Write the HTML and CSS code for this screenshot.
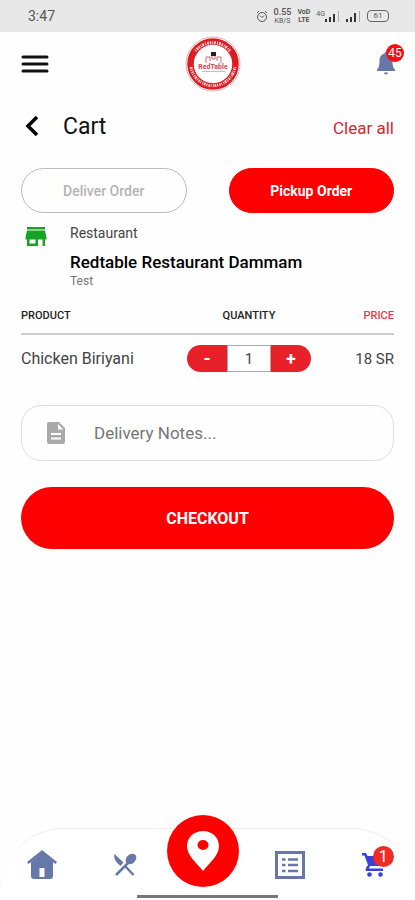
FILE: index.html
```html
<!DOCTYPE html>
<html lang="en">
  <head>
    <meta charset="UTF-8" />
    <meta name="viewport" content="width=device-width, initial-scale=1.0" />
    <title>Cart</title>
    <link rel="stylesheet" href="styles.css">
  </head>
  <body>
    <div class="statusbar">
      <span class="clock">3:47</span>
      <div class="status-icons">
        <svg width="12" height="14" viewBox="0 0 12 14" fill="none" stroke="#555">
          <circle cx="6" cy="8" r="4.5" />
          <path d="M4 6.500l2 2 2-2M1 4l2-2M11 4L9 2" />
        </svg>
        <span class="tiny"><b>0.55</b><small>KB/S</small></span>
        <span class="tiny tiny-bold"><small>VoD</small><small>LTE</small></span>
        <span class="signal">
          <small>4G</small>
          <svg width="15" height="12" viewBox="0 0 15 12">
            <path d="M0 9h2v3H0zM4 7h2v5H4zM8 4h2v8H8z" fill="#333" />
            <path d="M13 1h1v11h-1z" fill="#aaa" />
          </svg>
        </span>
        <svg width="15" height="12" viewBox="0 0 15 12">
          <path d="M0 9h2v3H0zM4 7h2v5H4zM8 3h2v9H8z" fill="#333" />
          <path d="M13 1h1v11h-1z" fill="#aaa" />
        </svg>
        <span class="battery">61</span>
      </div>
    </div>

    <header class="topbar">
      <button class="icon-btn" aria-label="Menu">
        <svg width="28" height="18" viewBox="0 0 28 18" stroke="#111" stroke-width="3" stroke-linecap="round">
          <path d="M2 2h24M2 9h24M2 16h24" />
        </svg>
      </button>
      <svg class="logo" width="56" height="56" viewBox="0 0 56 56">
        <circle cx="28" cy="28" r="27" fill="#fff" stroke="#ddb5b5" />
        <circle cx="28" cy="28" r="22.500" fill="none" stroke="#dc1b22" stroke-width="6.500" />
        <path d="M10.500 15A22 22 0 0 1 45 15" fill="none" stroke="#fff" stroke-width="3" stroke-dasharray="1 1 2 .8 1.500 1 .8 .7 2 1.200" opacity=".8" />
        <path d="M6 31A22.300 22.300 0 0 0 50 31" fill="none" stroke="#fff" stroke-width="3" stroke-dasharray="2 .8 1 1 1.500 .8 .8 1.300 1 .7" opacity=".8" />
        <path d="M26 16h5v4h-5z" fill="#222" />
        <path d="M21 27v-6h4v4M36 27v-6h-4v4M27 20v3h3v-3" fill="none" stroke="#cf6a6e" />
        <text x="28" y="33" text-anchor="middle" class="logo-text">RedTable</text>
        <path d="M17 35.500h23" stroke="#e5b3b5" />
      </svg>
      <button class="icon-btn bell" aria-label="Notifications">
        <svg width="20" height="26" viewBox="0 0 20 26" fill="#6678a8">
          <path d="M10 1c1 0 1.500.7 1.500 1.600C15 3.500 16.500 6.500 16.500 10c0 5 .8 7 2.500 8.500V20H1v-1.500C2.700 17 3.500 15 3.500 10c0-3.500 1.500-6.500 5-7.400C8.500 1.700 9 1 10 1z" />
          <path d="M8 21.500h4a2 2 0 0 1-4 0z" />
        </svg>
        <span class="badge">45</span>
      </button>
    </header>

    <main>
      <div class="title-row">
        <button class="icon-btn" aria-label="Back">
          <svg width="20" height="22" viewBox="0 0 20 22" fill="none" stroke="#000" stroke-width="3.500">
            <path d="M16 2L7 11l9 9" />
          </svg>
        </button>
        <h1>Cart</h1>
        <a href="#" class="clear">Clear all</a>
      </div>

      <div class="order-type">
        <button class="pill">Deliver Order</button>
        <button class="pill pill-active">Pickup Order</button>
      </div>

      <section class="restaurant">
        <svg width="22" height="20" viewBox="0 0 22 20" fill="#15a522">
          <path d="M2 0h18v2.500H2zM2 3.500h18l1.500 7v2H20V19h-2.500v-6.500H13V19H2v-6.500H.5v-2zM4.500 12.500v4h6v-4z" fill-rule="evenodd" />
        </svg>
        <div>
          <p class="label">Restaurant</p>
          <h2>Redtable Restaurant Dammam</h2>
          <p class="note">Test</p>
        </div>
      </section>

      <table class="cart">
        <thead>
          <tr>
            <th class="product">PRODUCT</th>
            <th class="quantity">QUANTITY</th>
            <th class="price">PRICE</th>
          </tr>
        </thead>
        <tbody>
          <tr>
            <td class="product">Chicken Biriyani</td>
            <td class="quantity">
              <div class="stepper">
                <button aria-label="Decrease">-</button>
                <input type="text" value="1" aria-label="Quantity" />
                <button aria-label="Increase">+</button>
              </div>
            </td>
            <td class="price">18 SR</td>
          </tr>
        </tbody>
      </table>

      <label class="notes">
        <svg width="18" height="22" viewBox="0 0 18 22">
          <path d="M2 0h10l6 6v14a2 2 0 0 1-2 2H2a2 2 0 0 1-2-2V2a2 2 0 0 1 2-2zM11 2v5.500h5.500zM4 11v2h10v-2zM4 15.500v2h10v-2z" fill="#aaa" fill-rule="evenodd" />
        </svg>
        <input type="text" placeholder="Delivery Notes..." aria-label="Delivery notes" />
      </label>

      <button class="checkout">CHECKOUT</button>
    </main>

    <nav class="tabs">
      <a href="#" aria-label="Home">
        <svg width="32" height="30" viewBox="0 0 32 30" fill="#6678a8">
          <path d="M16 0l15 12-1.500 2L16 4 2.500 14 1 12z" />
          <path d="M16 3l11 9V26a3 3 0 0 1-3 3H8a3 3 0 0 1-3-3V12zM13.500 18v9h5v-9z" fill-rule="evenodd" />
        </svg>
      </a>
      <a href="#" aria-label="Restaurants">
        <svg width="24" height="24" viewBox="0 0 24 24" fill="#6678a8">
          <path d="M1.500 1l9 8.500-3 3.500C2 8.500.5 5 1.500 1z" />
          <path d="M12 13l8.500 9M3 22l13-13" stroke="#6678a8" stroke-width="2.500" />
          <ellipse cx="18" cy="6" rx="4.500" ry="6" transform="rotate(45 18 6)" />
        </svg>
      </a>
      <a href="#" class="fab" aria-label="Location">
        <svg width="32" height="40" viewBox="0 0 32 40">
          <path d="M16 0C7 0 0 6.500 0 15c0 10 10 17 16 25 6-8 16-15 16-25C32 6.500 25 0 16 0zM16 9a5.500 5 0 1 1 0 10 5.500 5 0 0 1 0-10z" fill="#fff" fill-rule="evenodd" />
        </svg>
      </a>
      <a href="#" aria-label="Orders">
        <svg width="30" height="28" viewBox="0 0 30 28" fill="none" stroke="#6678a8">
          <path d="M1.500 1.500h27v25h-27z" stroke-width="3" />
          <path d="M7 8.500h3.500M7 14h3.500M7 20h3.500M13 8.500h10M13 14h10M13 20h10" stroke-width="2.500" />
        </svg>
      </a>
      <a href="#" class="cart-tab" aria-label="Cart">
        <svg width="24" height="24" viewBox="0 0 24 24" fill="#3543d8">
          <path d="M0 0h4l1.500 3H22l-4 10H8l-1 2.500h14V18H5c-2 0-1.500-2-.5-4L6 12 2.500 2.500H0z" />
          <circle cx="7.500" cy="21.500" r="2.300" />
          <circle cx="18.500" cy="21.500" r="2.300" />
        </svg>
        <span class="badge badge-cart">1</span>
      </a>
      <span class="home-bar"></span>
    </nav>
  </body>
</html>
```
FILE: styles.css
```css
* {
  box-sizing: border-box;
}
body {
  margin: 0;
  min-height: 100vh;
  display: flex;
  flex-direction: column;
  background-color: #fefefe;
  font-family: Roboto, "Liberation Sans", sans-serif;
  color: #444;
}
button,
input {
  font-family: inherit;
  border: none;
  padding: 0;
  background: none;
}
button {
  cursor: pointer;
}
svg {
  display: block;
  flex-shrink: 0;
}
h1,
h2,
p {
  margin: 0;
}
a {
  text-decoration: none;
}

.statusbar {
  height: 32px;
  padding: 0 26px 0 28px;
  display: flex;
  align-items: center;
  justify-content: space-between;
  background-color: #e8e8e8;
  color: #555;
}
.clock {
  font-size: 14px;
}
.status-icons {
  display: flex;
  align-items: center;
  gap: 6px;
}
.tiny {
  display: flex;
  flex-direction: column;
  align-items: center;
  font-size: 9px;
  line-height: 9px;
}
.tiny b {
  font-weight: 500;
}
.tiny small {
  font-size: 7px;
  line-height: 8px;
}
.tiny-bold {
  font-weight: bold;
}
.signal {
  display: flex;
  align-items: center;
}
.signal small {
  font-size: 7px;
  line-height: 8px;
  align-self: flex-start;
}
.battery {
  width: 22px;
  height: 12px;
  border: 1px solid #666;
  border-radius: 4px;
  font-size: 8px;
  line-height: 10px;
  text-align: center;
}

.topbar {
  height: 64px;
  padding: 0 19px 0 21px;
  display: flex;
  align-items: center;
  justify-content: space-between;
}
.logo-text {
  font-size: 7px;
  font-weight: bold;
  fill: #c9494e;
}
.bell {
  position: relative;
}
.badge {
  position: absolute;
  top: -7px;
  left: 10px;
  width: 18px;
  height: 18px;
  border-radius: 50%;
  background-color: #f50f14;
  color: #fff;
  font-size: 12px;
  line-height: 18px;
  text-align: center;
}

main {
  flex: 1;
  padding: 12px 21px;
}
.title-row {
  display: flex;
  align-items: center;
  height: 36px;
}
h1 {
  margin-left: 22px;
  font-size: 23px;
  font-weight: 400;
  color: #111;
}
.clear {
  margin-left: auto;
  padding-top: 4px;
  font-size: 17px;
  color: #d22830;
}

.order-type {
  display: grid;
  grid-template-columns: 1fr 1fr;
  gap: 42px;
  margin-top: 24px;
}
.pill {
  height: 45px;
  border: 1px solid #bbb;
  border-radius: 23px;
  font-size: 14px;
  font-weight: 500;
  color: #b4b4b4;
}
.pill-active {
  border-color: #f00;
  background-color: #f00;
  color: #fff;
  font-weight: bold;
}

.restaurant {
  display: flex;
  gap: 23px;
  padding: 0 4px;
  margin-top: 12px;
}
.restaurant svg {
  margin-top: 2px;
}
.label {
  font-size: 14px;
  line-height: 16px;
}
h2 {
  margin-top: 9px;
  font-size: 17px;
  line-height: 24px;
  font-weight: 500;
  color: #000;
}
.note {
  font-size: 12px;
  line-height: 15px;
  color: #777;
}

.cart {
  width: 100%;
  margin-top: 16px;
  border-collapse: collapse;
  table-layout: fixed;
}
.cart th {
  height: 29px;
  padding: 0 0 8px;
  border-bottom: 2px solid #ccc;
  font-size: 11px;
  font-weight: 500;
  color: #222;
}
.cart td {
  height: 48px;
  padding: 0;
  font-size: 16px;
}
.cart .product {
  text-align: left;
}
.cart .quantity {
  width: 124px;
  text-align: center;
}
.cart .price {
  width: 83px;
  text-align: right;
}
.cart th.price {
  color: #ee3a48;
}
.cart td.price {
  font-size: 15px;
}
.stepper {
  display: flex;
  height: 27px;
  border-radius: 14px;
  overflow: hidden;
}
.stepper button {
  flex: 1;
  background-color: #e8202a;
  color: #fff;
  font-size: 18px;
  font-weight: bold;
}
.stepper input {
  width: 44px;
  border: 1px solid #aaa;
  background-color: #fff;
  color: #444;
  font-size: 15px;
  text-align: center;
}

.notes {
  display: flex;
  align-items: center;
  gap: 29px;
  height: 56px;
  margin-top: 23px;
  padding: 0 25px;
  border: 1px solid #ddd;
  border-radius: 20px;
}
.notes input {
  flex: 1;
  min-width: 0;
  font-size: 17px;
}
.notes input::placeholder {
  color: #777;
}
.checkout {
  width: 100%;
  height: 62px;
  margin-top: 26px;
  border-radius: 31px;
  background-color: #f00;
  color: #fff;
  font-size: 16px;
  font-weight: bold;
}

.tabs {
  position: relative;
  display: grid;
  grid-template-columns: 20fr 20fr 18fr 24fr 18fr;
  place-items: center;
  height: 72px;
  border-top: 1px solid #eee;
  border-radius: 64px 64px 0 0;
  background-color: #fff;
}
.fab {
  display: grid;
  place-items: center;
  width: 72px;
  height: 72px;
  margin-top: -28px;
  border-radius: 50%;
  background-color: #f00;
}
.cart-tab {
  position: relative;
  margin-right: 8px;
}
.badge-cart {
  top: -7px;
  left: 11px;
  width: 21px;
  height: 21px;
  background-color: #f22b24;
  font-size: 16px;
  line-height: 21px;
}
.home-bar {
  position: absolute;
  bottom: 2px;
  left: 33%;
  right: 33%;
  height: 3px;
  background-color: #777;
}
```
